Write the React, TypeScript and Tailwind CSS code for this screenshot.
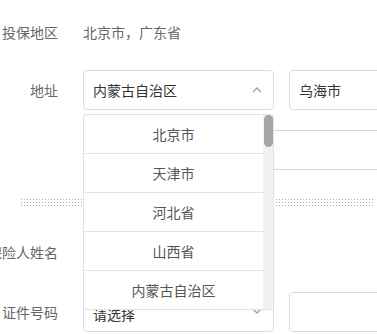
import React from "react";

const font = { fontFamily: '"Noto Sans CJK SC", "Noto Sans", sans-serif' };

function Label({ children }: { children: React.ReactNode }) {
  return (
    <div className="w-[58px] shrink-0 flex justify-end whitespace-nowrap text-[14px] text-[#666]">
      {children}
    </div>
  );
}

function ChevronUp() {
  return (
    <svg width="10" height="6" viewBox="0 0 10 6" fill="none">
      <path d="M1 5 L5 1 L9 5" stroke="#a0a0a0" strokeWidth="1.4" />
    </svg>
  );
}

function ChevronDown() {
  return (
    <svg width="10" height="6" viewBox="0 0 10 6" fill="none">
      <path d="M1 1 L5 5 L9 1" stroke="#a0a0a0" strokeWidth="1.4" />
    </svg>
  );
}

const provinces = ["北京市", "天津市", "河北省", "山西省", "内蒙古自治区"];

export default function App() {
  return (
    <div className="w-[377px] h-[334px] overflow-hidden bg-white relative" style={font}>
      <div className="flex flex-col pt-[12px]">
        {/* Row 1 */}
        <div className="flex items-center h-[40px]">
          <Label>投保地区</Label>
          <div className="ml-[25px] text-[14px] text-[#666] whitespace-nowrap">北京市，广东省</div>
        </div>

        {/* Row 2 */}
        <div className="flex items-center h-[40px] mt-[18px]">
          <Label>地址</Label>
          <div className="ml-[25px] relative w-[191px] h-[40px] shrink-0">
            <div className="w-full h-full border border-[#dcdcdc] rounded-[4px] flex items-center justify-between pl-[9px] pr-[11px] text-[14px] text-[#333]">
              <span>内蒙古自治区</span>
              <ChevronUp />
            </div>
            {/* dropdown */}
            <div className="absolute left-0 top-[44px] w-[191px] h-[196px] bg-white border border-[#e2e2e2] rounded-[3px] flex z-10 overflow-hidden">
              <div className="flex-1 flex flex-col">
                {provinces.map((p, i) => (
                  <div
                    key={p}
                    className={`h-[39px] shrink-0 flex items-center justify-center text-[14px] text-[#555] ${
                      i < provinces.length - 1 ? "border-b border-[#e2e2e2]" : ""
                    }`}
                  >
                    {p}
                  </div>
                ))}
              </div>
              <div className="w-[10px] bg-[#f1f1f1] flex justify-center">
                <div className="w-[9px] h-[32px] rounded-full bg-[#a6a6a6] mt-[0px]" />
              </div>
            </div>
          </div>
          <div className="ml-[15px] w-[120px] h-[40px] shrink-0 border border-[#dcdcdc] rounded-[4px] flex items-center pl-[9px] text-[14px] text-[#333]">
            乌海市
          </div>
        </div>

        {/* Row 3 detail address */}
        <div className="flex items-center h-[40px] mt-[20px]">
          <div className="w-[58px] shrink-0" />
          <div className="ml-[25px] w-[330px] h-[40px] shrink-0 border border-[#d4d4d4] rounded-[4px]" />
        </div>

        {/* Divider */}
        <div className="mt-[28px] ml-[20px] mr-[2px] h-[8px] bg-[radial-gradient(circle,#a8a8a8_0.8px,transparent_1px)] bg-[length:3px_3px]" />

        {/* Row 4 */}
        <div className="flex items-center h-[40px] mt-[26px]">
          <Label>被保险人姓名</Label>
          <div className="ml-[25px] w-[191px] h-[40px] shrink-0 border border-[#dcdcdc] rounded-[4px]" />
        </div>

        {/* Row 5 */}
        <div className="flex items-center h-[40px] mt-[20px]">
          <Label>证件号码</Label>
          <div className="ml-[25px] w-[191px] h-[40px] shrink-0 border border-[#dcdcdc] rounded-[4px] flex items-center justify-between pl-[9px] pr-[11px] text-[14px] text-[#333]">
            <span className="mt-[4px]">请选择</span>
            <span className="mb-[2px]"><ChevronDown /></span>
          </div>
          <div className="ml-[15px] w-[120px] h-[40px] shrink-0 border border-[#dcdcdc] rounded-[4px]" />
        </div>
      </div>
    </div>
  );
}
